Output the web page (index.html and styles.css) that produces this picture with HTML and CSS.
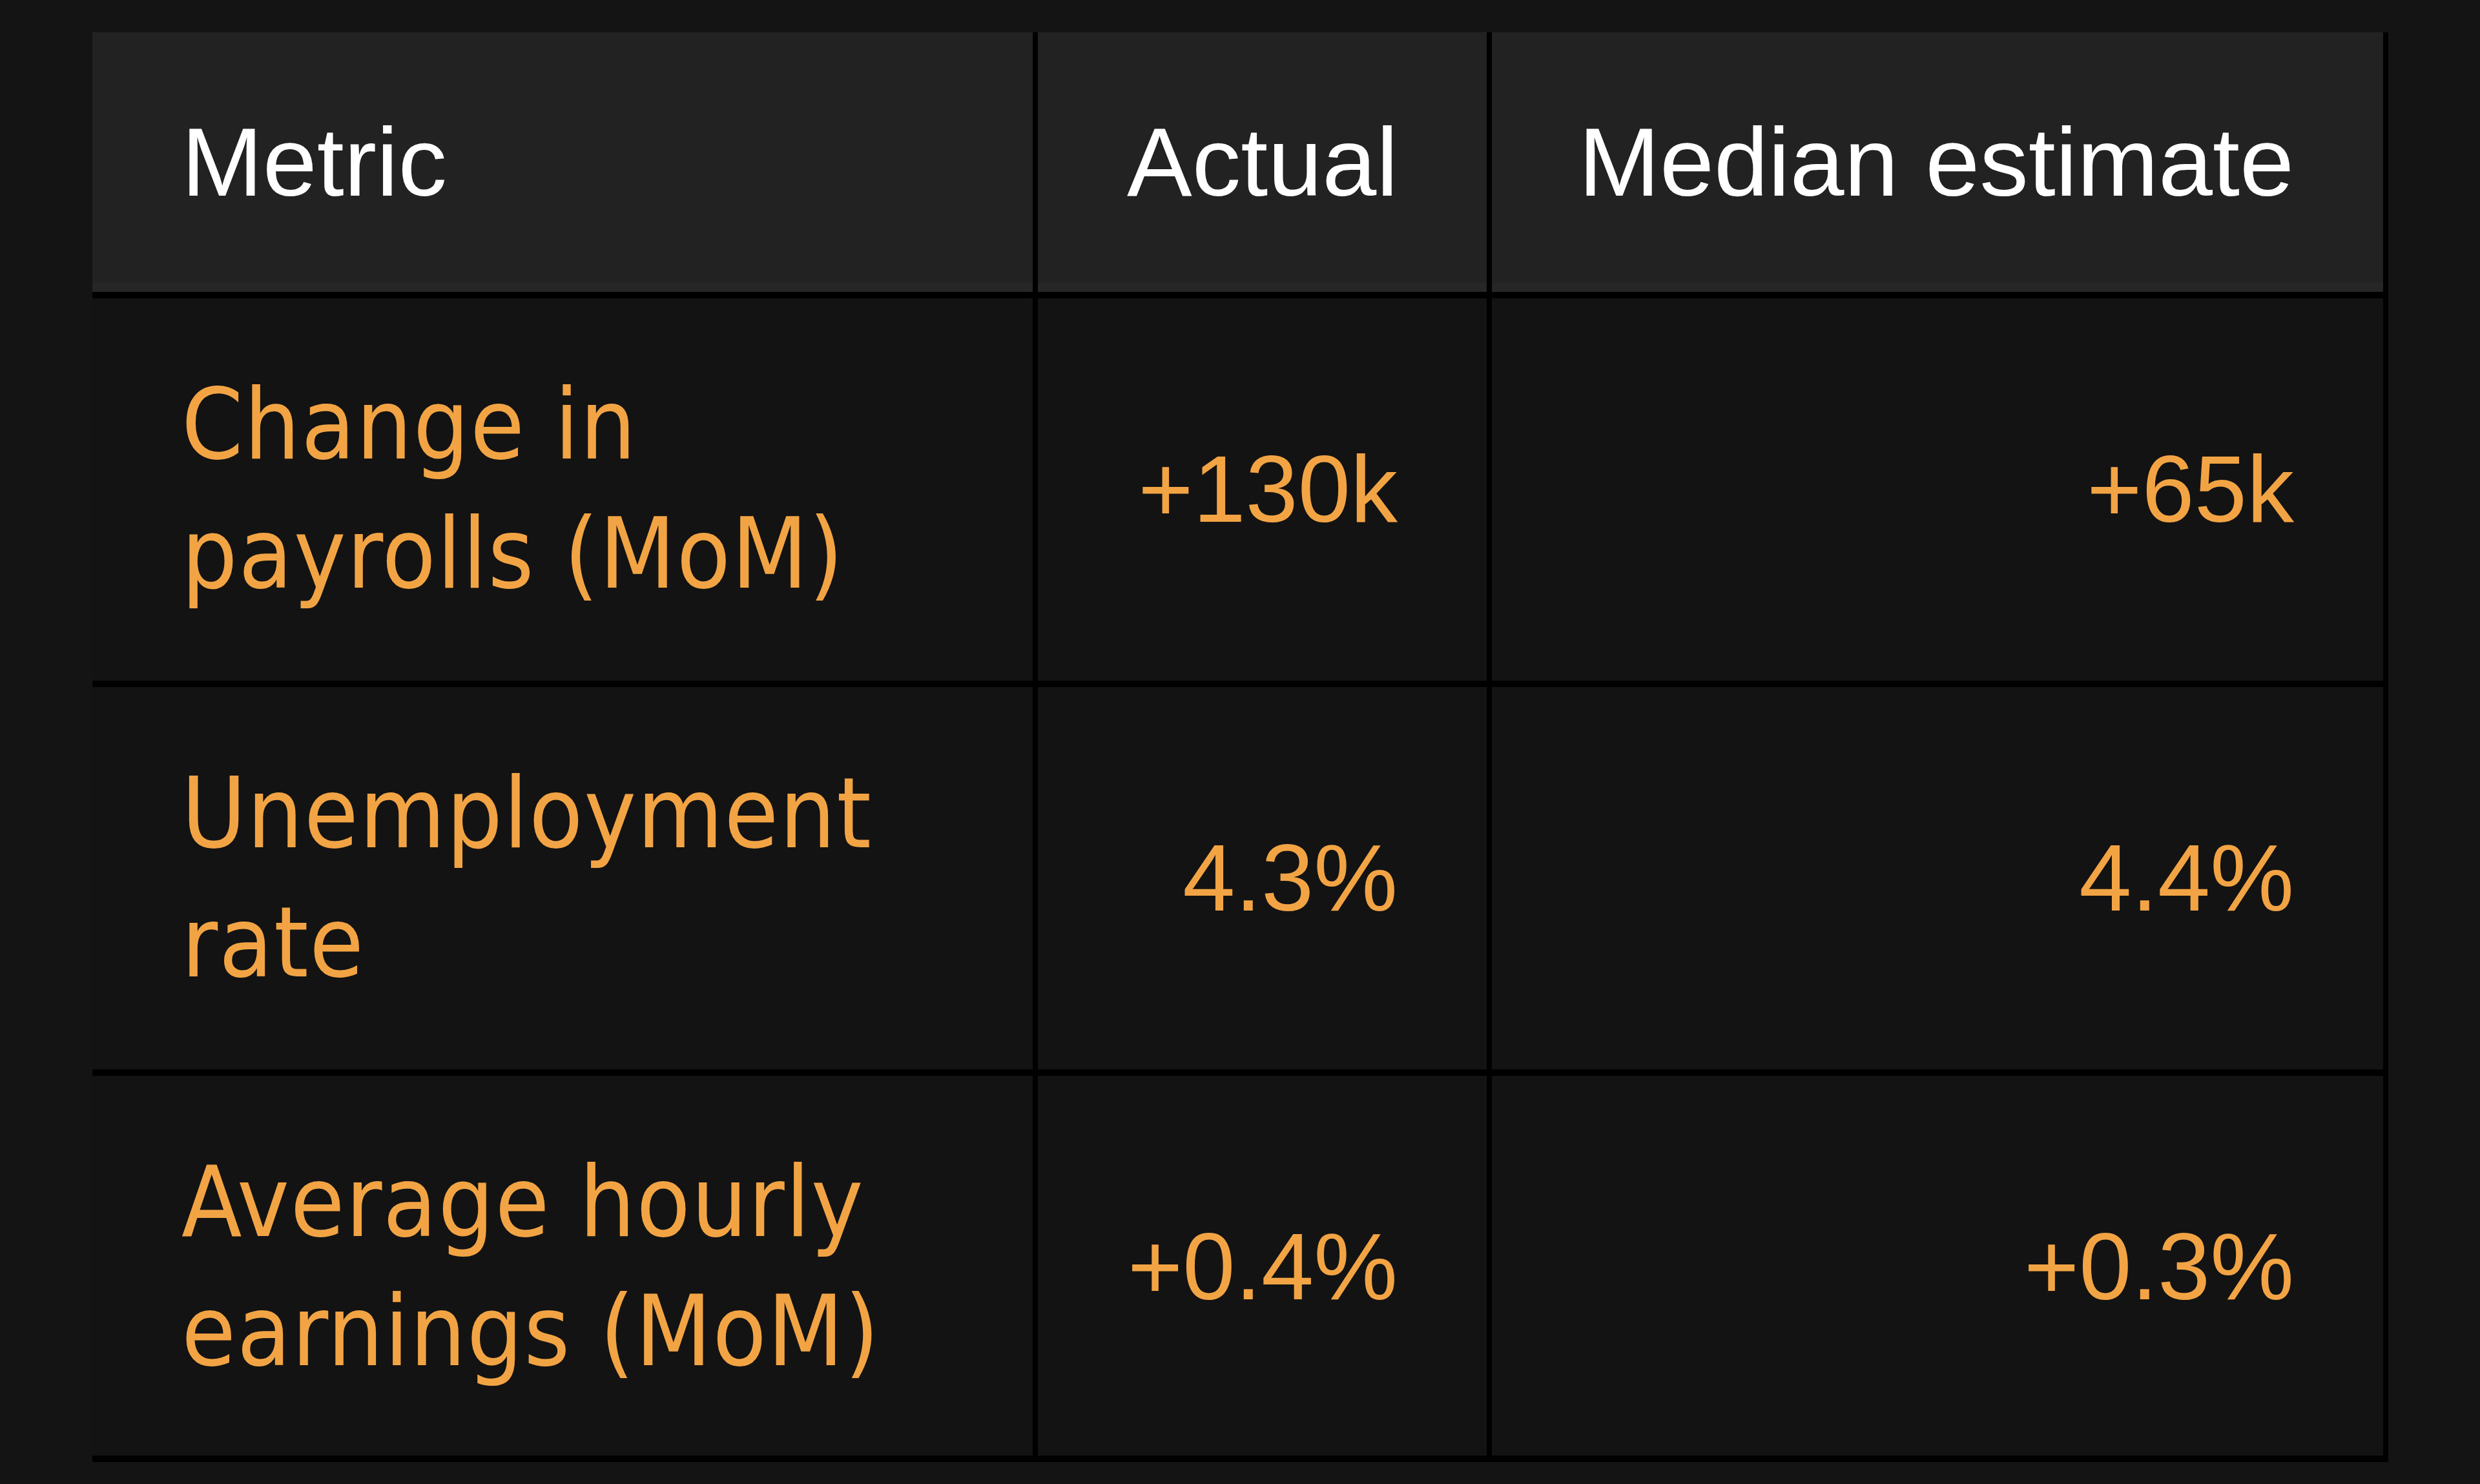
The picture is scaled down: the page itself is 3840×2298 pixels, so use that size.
FILE: index.html
```html
<!DOCTYPE html>
<html lang="en">
<head>
<meta charset="utf-8">
<title>Jobs report</title>
<link rel="stylesheet" href="styles.css">
</head>
<body>
<div class="wrap">
  <table class="data">
    <colgroup>
      <col class="c1">
      <col class="c2">
      <col class="c3">
    </colgroup>
    <thead>
      <tr>
        <th class="metric">Metric</th>
        <th class="num">Actual</th>
        <th class="num wide">Median estimate</th>
      </tr>
    </thead>
    <tbody>
      <tr>
        <td class="metric">Change in payrolls (MoM)</td>
        <td class="num">+130k</td>
        <td class="num">+65k</td>
      </tr>
      <tr>
        <td class="metric">Unemployment rate</td>
        <td class="num">4.3%</td>
        <td class="num">4.4%</td>
      </tr>
      <tr class="last">
        <td class="metric">Average hourly earnings (MoM)</td>
        <td class="num">+0.4%</td>
        <td class="num">+0.3%</td>
      </tr>
    </tbody>
  </table>
</div>
</body>
</html>
```

FILE: styles.css
```css
html, body {
  margin: 0;
  padding: 0;
  background: #141414;
}

.wrap {
  padding: 50px 0 0 143px;
}

.data {
  border-collapse: separate;
  border-spacing: 0;
  table-layout: fixed;
  width: 3555px;
}

.c1 { width: 1464px; }
.c2 { width: 703px; }
.c3 { width: 1388px; }

.data th,
.data td {
  border-right: 8px solid #000;
  border-bottom: 10px solid #000;
  padding: 96px 138px;
  line-height: 200px;
  vertical-align: middle;
}

.data th {
  background: #222222;
  box-shadow: inset 0 -14px 0 #262626;
  color: #ffffff;
  font-family: "Liberation Sans", Arial, sans-serif;
  font-size: 151px;
  font-weight: normal;
  white-space: nowrap;
  padding-top: 101px;
  padding-bottom: 101px;
}

.data th.wide {
  padding-left: 100px;
}

.data td {
  background: #131313;
  color: #f2a444;
}

.data .last td {
  padding-bottom: 92px;
}

.data .metric {
  text-align: left;
}

.data .num {
  text-align: right;
}

.data td.metric {
  font-family: "DejaVu Sans Condensed", "DejaVu Sans", sans-serif;
  font-stretch: condensed;
  font-size: 152px;
  letter-spacing: 1.5px;
}

.data td.num {
  font-family: "Liberation Sans", Arial, sans-serif;
  font-size: 146px;
}
```
